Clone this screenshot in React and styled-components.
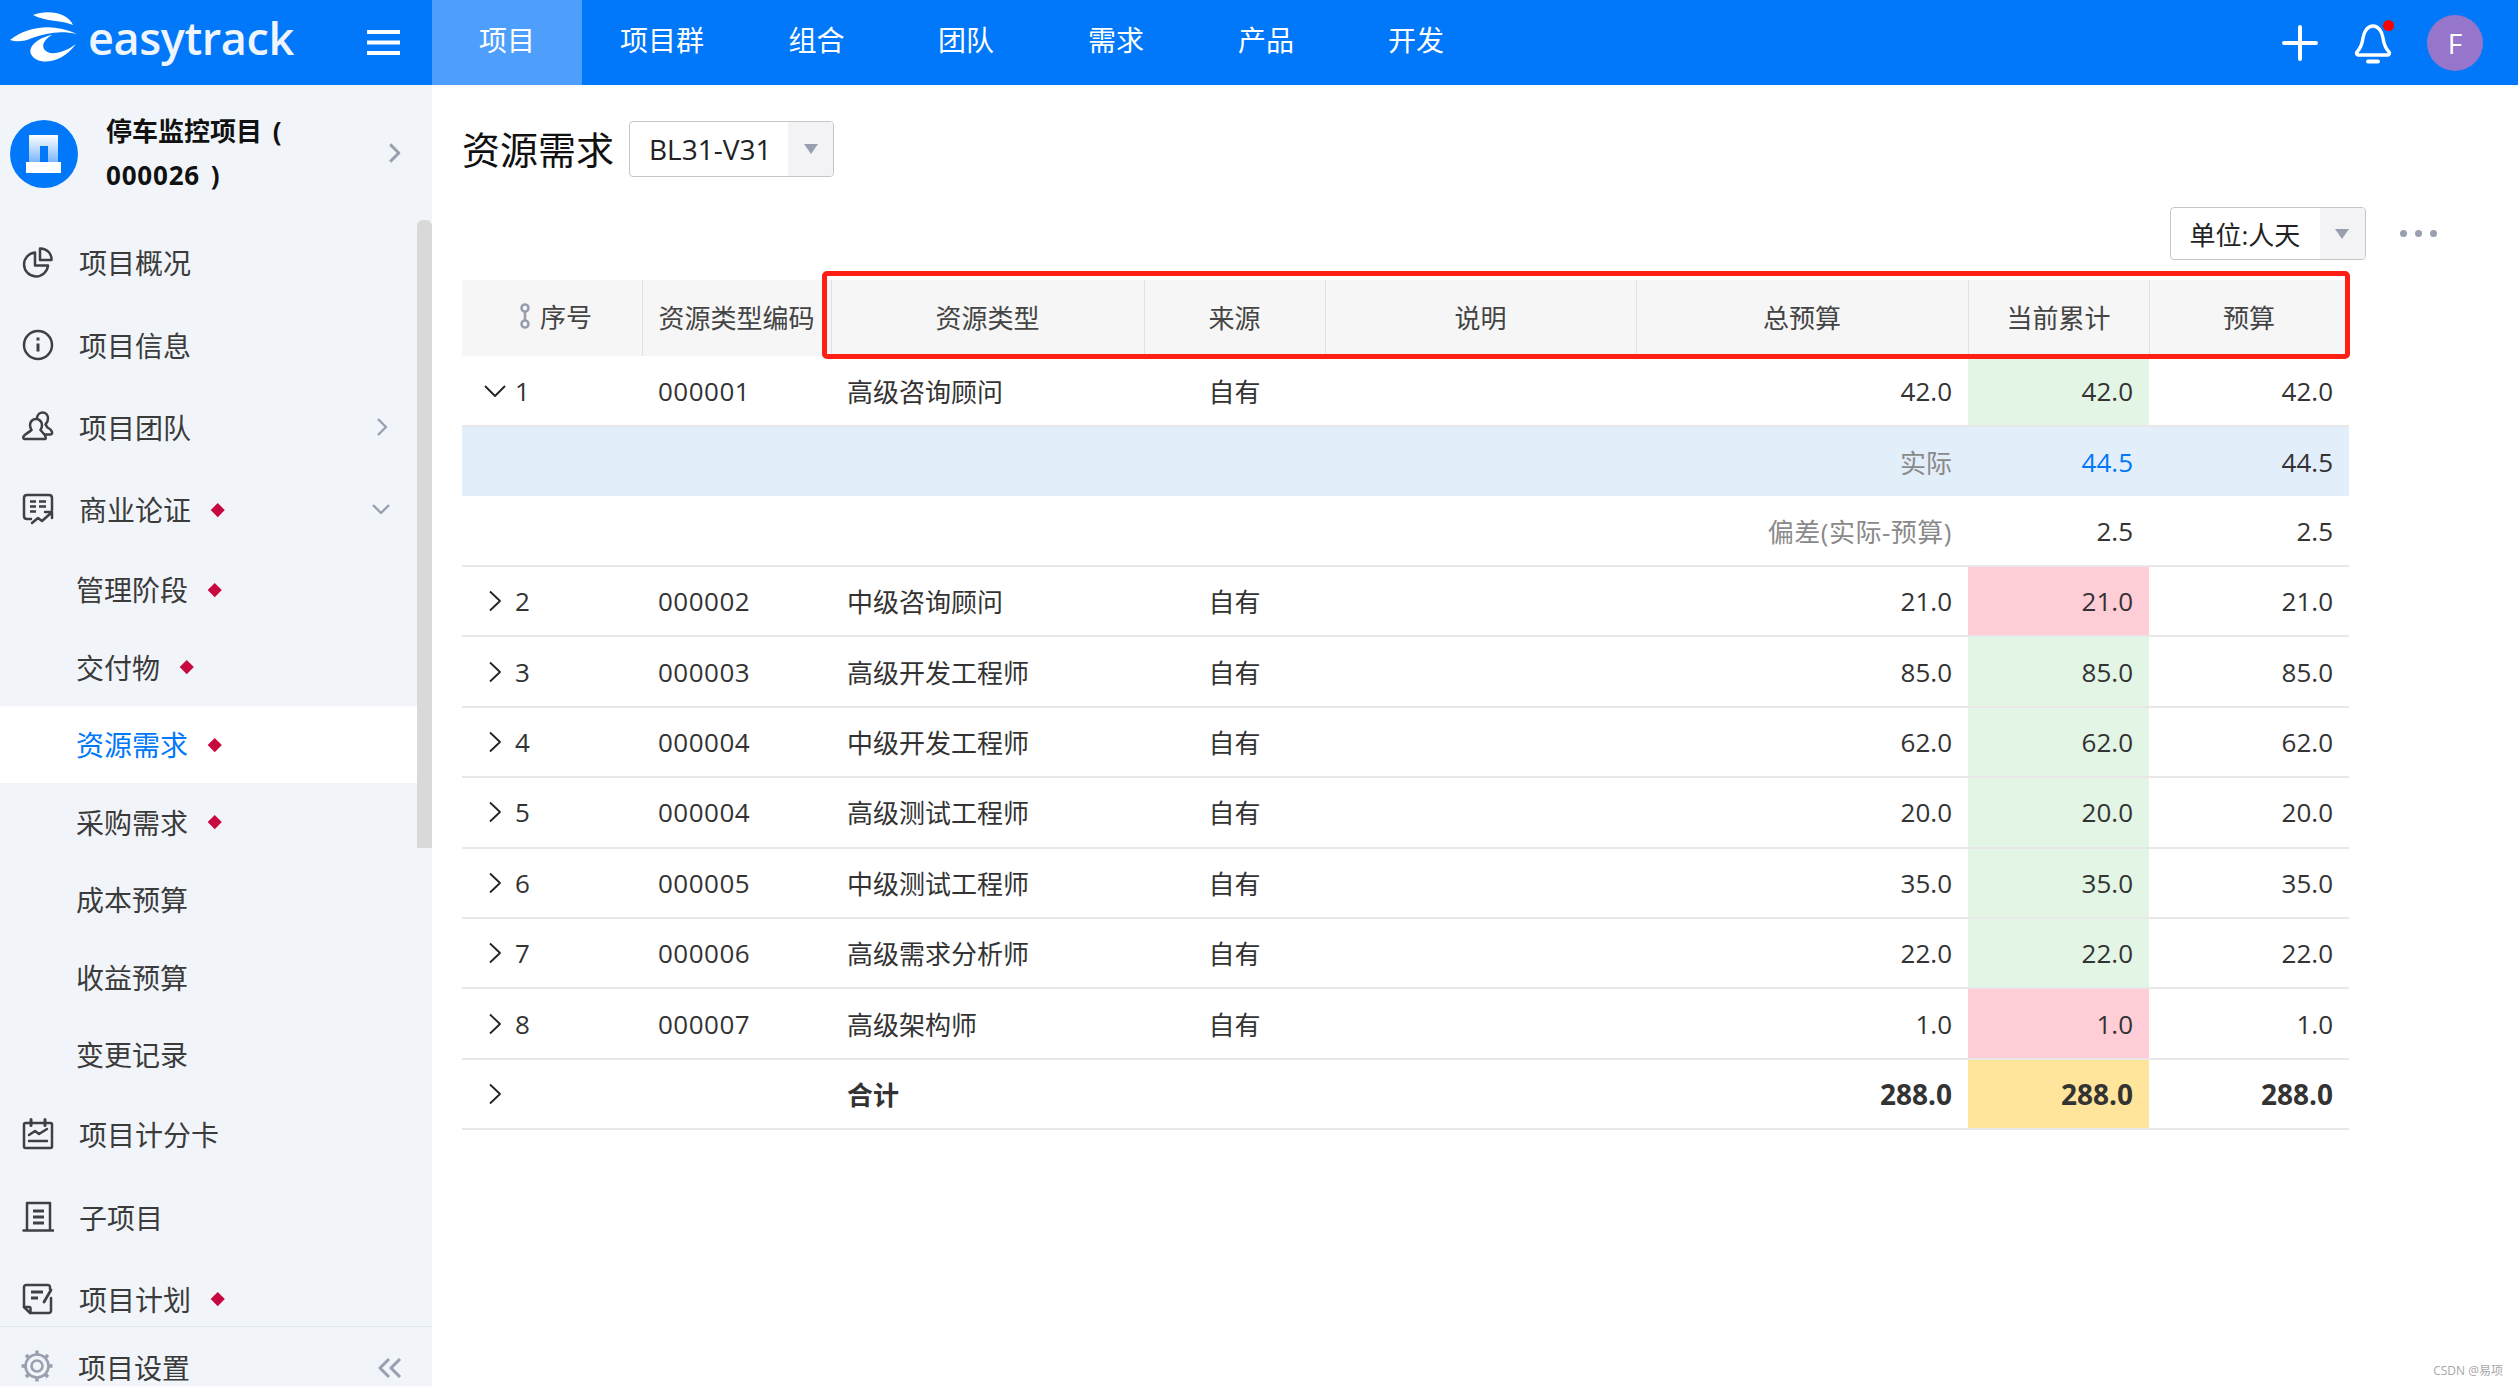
import React from 'react'
import styled, { createGlobalStyle } from 'styled-components'

const GlobalStyle = createGlobalStyle`
  html, body { margin: 0; padding: 0; background: #fff; }
  body { font-family: "Open Sans", "Noto Sans CJK SC", sans-serif; color: #333; }
  * { box-sizing: border-box; }
`

const Page = styled.div`
  position: relative;
  width: 2518px;
  height: 1386px;
  overflow: hidden;
  display: flex;
  flex-direction: column;
`

const TopBar = styled.header`
  height: 85px;
  flex-shrink: 0;
  background: #0078f9;
  display: flex;
  align-items: stretch;
  color: #fff;
`

const Brand = styled.div`
  width: 432px;
  display: flex;
  align-items: center;
  flex-shrink: 0;
`

const BrandName = styled.span`
  margin-left: 4px;
  width: 279px;
  font-family: "Open Sans", sans-serif;
  font-size: 45px;
  font-weight: 600;
  letter-spacing: -0.4px;
  color: #eef5fe;
  margin-top: -10px;
`

const Tab = styled.div`
  width: ${p => p.$width}px;
  display: flex;
  align-items: center;
  justify-content: center;
  padding-bottom: 8px;
  font-size: 28px;
  background: ${p => (p.$active ? '#4e9ffb' : 'transparent')};
`

const TopActions = styled.div`
  margin-left: auto;
  display: flex;
  align-items: center;
  padding-right: 35px;
`

const BellWrap = styled.div`
  position: relative;
  margin-left: 36px;
  width: 38px;
  height: 42px;
`

const BellDot = styled.span`
  position: absolute;
  right: -2px;
  top: -2px;
  width: 11px;
  height: 11px;
  border-radius: 50%;
  background: #ff0000;
`

const Avatar = styled.div`
  width: 56px;
  height: 56px;
  margin-left: 35px;
  border-radius: 50%;
  background: #9676ca;
  display: flex;
  align-items: center;
  justify-content: center;
  font-size: 28px;
`

const Body = styled.div`
  flex: 1;
  display: flex;
  min-height: 0;
`

const Sidebar = styled.aside`
  position: relative;
  width: 432px;
  flex-shrink: 0;
  background: #f1f5f9;
  display: flex;
  flex-direction: column;
  overflow: hidden;
`

const Thumb = styled.div`
  position: absolute;
  right: 0;
  top: 135px;
  width: 15px;
  height: 628px;
  background: #d9d9d9;
  border-radius: 6px 6px 0 0;
`

const ProjectHead = styled.div`
  height: 136px;
  flex-shrink: 0;
  display: flex;
  align-items: center;
  padding-left: 10px;
`

const ProjectLogo = styled.div`
  width: 68px;
  height: 68px;
  flex-shrink: 0;
  margin-top: 1px;
`

const ProjectName = styled.div`
  width: 282px;
  margin-left: 28px;
  font-size: 26px;
  line-height: 44px;
  font-weight: 700;
  word-spacing: 4px;
  color: #111;
`

const ProjectCode = styled.span`
  letter-spacing: 0.8px;
`

const Menu = styled.nav`
  flex: 1;
  min-height: 0;
  overflow: hidden;
`

const MenuRow = styled.div`
  height: ${p => (p.$sub ? '77.5px' : '82.4px')};
  display: flex;
  align-items: center;
  padding-left: ${p => (p.$sub ? '76px' : '22px')};
  padding-right: 41px;
  font-size: 28px;
  color: ${p => (p.$active ? '#0078f9' : '#3b3b3b')};
  background: ${p => (p.$active ? '#fff' : 'transparent')};
`

const MenuIcon = styled.span`
  width: 32px;
  height: 32px;
  margin-right: 25px;
  display: flex;
  color: #3d4046;
`

const Diamond = styled.i`
  width: 9.5px;
  height: 9.5px;
  margin-left: 22px;
  background: #c8093f;
  transform: rotate(45deg);
`

const MenuChevron = styled.span`
  margin-left: auto;
  margin-right: ${p => p.$inset || 0}px;
  margin-top: ${p => p.$drop || 0}px;
  display: flex;
  color: #9a9fb0;
`

const SideFooter = styled.div`
  height: 60px;
  flex-shrink: 0;
  border-top: 1px solid #dfe6ee;
  padding: 22px 30px 0 21px;
  display: flex;
  align-items: flex-start;
  font-size: 28px;
  line-height: 38px;
  color: #3b3b3b;
`

const Main = styled.main`
  flex: 1;
  padding: 36px 0 0 30px;
`

const TitleRow = styled.div`
  height: 56px;
  display: flex;
  align-items: center;
`

const Title = styled.h1`
  margin: -4px 15px 0 0;
  font-size: 38px;
  font-weight: 400;
  color: #111;
  width: 152px;
  white-space: nowrap;
`

const Select = styled.div`
  display: flex;
  align-items: stretch;
  width: ${p => p.$width}px;
  height: ${p => p.$height}px;
  border: 1px solid #c6c6c6;
  border-radius: 4px;
  font-size: ${p => p.$font}px;
  color: #222;
  overflow: hidden;
`

const SelectValue = styled.div`
  flex: 1;
  padding-left: 19px;
  display: flex;
  align-items: center;
  white-space: nowrap;
`

const SelectArrow = styled.div`
  width: 45px;
  background: #f3f3f5;
  display: flex;
  align-items: center;
  justify-content: center;

  &::after {
    content: '';
    border-left: 7px solid transparent;
    border-right: 7px solid transparent;
    border-top: 10px solid #9a9fb0;
  }
`

const ToolRow = styled.div`
  height: 53px;
  margin-top: 30px;
  display: flex;
  align-items: center;
  justify-content: flex-end;
  width: 1975px;
`

const Dots = styled.div`
  display: flex;
  gap: 7.5px;
  margin-left: 34px;

  span {
    width: 7.5px;
    height: 7.5px;
    border-radius: 50%;
    background: #9a9fb0;
  }
`

const TableWrap = styled.div`
  position: relative;
  width: 1887px;
  margin-top: 20px;
`

const Highlight = styled.div`
  position: absolute;
  left: 360px;
  top: -9px;
  width: 1528px;
  height: 88px;
  border: 5px solid #ff2015;
  border-radius: 5px;
`

const columns = '180px 189px 313px 181px 311px 332px 181px 200px'

const HeadRow = styled.div`
  display: grid;
  grid-template-columns: ${columns};
  height: 76px;
  background: #f6f6f6;
`

const HeadCell = styled.div`
  display: flex;
  align-items: center;
  justify-content: center;
  padding-bottom: ${p => (p.$first ? '4px' : '2px')};
  padding-left: ${p => (p.$first ? '7px' : '0')};
  padding-right: ${p => (p.$first ? '0' : '1px')};
  font-size: 26px;
  color: #444;
  white-space: nowrap;
  border-left: ${p => (p.$first ? 'none' : '1px solid #e2e2e2')};
`

const Row = styled.div`
  display: grid;
  grid-template-columns: ${columns};
  height: ${p => p.$height}px;
  background: ${p => (p.$blue ? '#e3eefb' : 'transparent')};
  border-bottom: ${p => (p.$blue ? 'none' : '2px solid #e8e8e8')};
  font-size: 26px;
  font-weight: ${p => (p.$bold ? 700 : 400)};
  color: #333;
`

const tones = { green: '#e3f5e5', pink: '#ffcdd6', yellow: '#ffe49b' }

const aligns = { right: 'flex-end', center: 'center' }

const Cell = styled.div`
  display: flex;
  align-items: center;
  padding: 0 16px;
  white-space: nowrap;
  justify-content: ${p => aligns[p.$align] || 'flex-start'};
  font-size: ${p => (p.$big ? '28px' : 'inherit')};
  letter-spacing: ${p => (p.$wide ? '0.5px' : 'normal')};
  background: ${p => tones[p.$tone] || 'transparent'};
  color: ${p => (p.$muted ? '#8a8a8a' : p.$link ? '#0078f9' : 'inherit')};
`

const IndexCell = styled.div`
  display: flex;
  align-items: center;
  padding-left: 21px;
  color: #333;
  font-weight: 400;
`

const Expander = styled.span`
  width: 24px;
  height: 24px;
  margin-right: 8px;
  display: flex;
  align-items: center;
  justify-content: center;
  color: #222;
`

const Watermark = styled.div`
  position: absolute;
  right: 15px;
  bottom: 7px;
  font-size: 12px;
  color: #a8a8a8;
`

const stroke = { fill: 'none', stroke: 'currentColor', strokeLinecap: 'round', strokeLinejoin: 'round' }

function Logo() {
  return (
    <svg width="84" height="85" viewBox="0 0 84 85" style={{ flexShrink: 0 }}>
      <g fill="#fff">
        <path d="M33 15C48 9 68 13 73 25C62 20 46 22 33 15Z" />
        <path d="M10 40C26 27 52 22 77 34C60 30 46 33 32 38C24 42 16 42 10 40Z" />
        <path d="M52 35C38 38 28 46 31 54C36 65 60 66 76 44C63 54 48 56 44 49C41 43 47 38 52 35Z" />
      </g>
    </svg>
  )
}

function Hamburger() {
  return (
    <svg width="33" height="25" viewBox="0 0 33 25">
      <path d="M0 2h33M0 12.500h33M0 23h33" stroke="#fff" strokeWidth="4" />
    </svg>
  )
}

function ChevronRight({ size = 10, w = 2.4 }) {
  return (
    <svg width={size + 2} height={size * 2} viewBox="0 0 12 20">
      <path d="M2 2l8 8-8 8" {...stroke} strokeWidth={w} strokeLinecap="butt" />
    </svg>
  )
}

function ChevronDown() {
  return (
    <svg width="20" height="12" viewBox="0 0 20 12">
      <path d="M2 2l8 8 8-8" {...stroke} strokeWidth="2.4" strokeLinecap="butt" />
    </svg>
  )
}

const icons = {
  pie: (
    <>
      <path d="M13 6.500A12 12 0 1 0 26 19.500H13Z" />
      <path d="M18 2.500A11 11 0 0 1 29.500 14H18Z" />
    </>
  ),
  info: (
    <>
      <circle cx="16" cy="16" r="14" />
      <path d="M16 14.500v8" strokeWidth="3" strokeLinecap="butt" />
      <path d="M16 8.500v3" strokeWidth="3" strokeLinecap="butt" />
    </>
  ),
  team: (
    <>
      <path d="M9.500 19c-1-1.500-1.500-3-1.500-5a6 6 0 0 1 12 0c0 2-.5 3.500-1.500 5l3 3.500c2 1.500 2.500 3.500 2 5.500H3c-1.500 0-2-1-1.500-2.500C2.500 23 6.500 22 9.500 19Z" />
      <path d="M15 6.500c.5-3 3-5 5.500-5 3.500 0 5.500 3 5.500 6 0 2.500-1 4.500-2.500 6l2 3c2 1 4 2.500 4.500 4.500.5 1.500-.5 2.500-2 2.500h-4" />
    </>
  ),
  biz: (
    <>
      <path d="M9 26H5c-2 0-3-1-3-3V5c0-2 1-3 3-3h22c2 0 3 1 3 3v12" />
      <path d="M8 8.500h6M17 8.500h7M8 13.500h6M17 13.500h7M8 18.500h6" strokeWidth="2.600" strokeLinecap="butt" />
      <path d="M10 30l6-5 4 3 9-8M23 19h7v6" />
    </>
  ),
  card: (
    <>
      <rect x="2" y="5" width="28" height="25" rx="1.500" />
      <path d="M9 1.500v6M23 1.500v6" strokeWidth="3" />
      <path d="M7 17l6-4 4 3 8-5M7 23h18" />
    </>
  ),
  doc: (
    <>
      <path d="M5 28V2h23v26M1.500 29.500h30" />
      <path d="M11 10h11M11 16h11M11 22h11" strokeWidth="2.800" strokeLinecap="butt" />
    </>
  ),
  plan: (
    <>
      <path d="M28 6V4c0-1-1-2-2-2H4C3 2 2 3 2 4v20l6 6h19c1 0 2-1 2-2V15" />
      <path d="M2 24h5c1 0 1.500.5 1.500 1.500V30" />
      <path d="M9 9h12M9 15h7" strokeWidth="2.800" strokeLinecap="butt" />
      <path d="M22 19l7-12" strokeWidth="2.800" />
    </>
  ),
}

function MenuGlyph({ name }) {
  return (
    <svg width="32" height="32" viewBox="0 0 32 32" {...stroke} strokeWidth="2.500">
      {icons[name]}
    </svg>
  )
}

function Gear() {
  return (
    <svg width="32" height="34" viewBox="0 0 32 34" style={{ marginRight: 25, flexShrink: 0, color: '#9a9fb0' }} {...stroke}>
      <circle cx="16" cy="17" r="11.500" strokeWidth="2.600" />
      <circle cx="16" cy="17" r="5.500" strokeWidth="2.600" />
      <path d="M16 1.500v4M16 28.500v4M.5 17h4M27.500 17h4M5 6l3 3M24 25l3 3M27 6l-3 3M8 25l-3 3" strokeWidth="3.400" strokeLinecap="butt" />
    </svg>
  )
}

const tabs = [
  { label: '项目', width: 150 },
  { label: '项目群', width: 160 },
  { label: '组合', width: 149 },
  { label: '团队', width: 150 },
  { label: '需求', width: 150 },
  { label: '产品', width: 150 },
  { label: '开发', width: 150 },
]

const topMenu = [
  { name: '项目概况', icon: 'pie' },
  { name: '项目信息', icon: 'info' },
  { name: '项目团队', icon: 'team', arrow: 'right' },
  { name: '商业论证', icon: 'biz', arrow: 'down', mark: true },
]

const subMenu = [
  { name: '管理阶段', mark: true },
  { name: '交付物', mark: true },
  { name: '资源需求', mark: true, active: true },
  { name: '采购需求', mark: true },
  { name: '成本预算' },
  { name: '收益预算' },
  { name: '变更记录' },
]

const bottomMenu = [
  { name: '项目计分卡', icon: 'card' },
  { name: '子项目', icon: 'doc' },
  { name: '项目计划', icon: 'plan', mark: true },
]

const rows = [
  { no: 2, code: '000002', type: '中级咨询顾问', val: '21.0', tone: 'pink' },
  { no: 3, code: '000003', type: '高级开发工程师', val: '85.0', tone: 'green' },
  { no: 4, code: '000004', type: '中级开发工程师', val: '62.0', tone: 'green' },
  { no: 5, code: '000004', type: '高级测试工程师', val: '20.0', tone: 'green' },
  { no: 6, code: '000005', type: '中级测试工程师', val: '35.0', tone: 'green' },
  { no: 7, code: '000006', type: '高级需求分析师', val: '22.0', tone: 'green' },
  { no: 8, code: '000007', type: '高级架构师', val: '1.0', tone: 'pink' },
]

function TopItem({ item }) {
  return (
    <MenuRow>
      <MenuIcon><MenuGlyph name={item.icon} /></MenuIcon>
      {item.name}
      {item.mark && <Diamond />}
      {item.arrow === 'right' && <MenuChevron $inset={3}><ChevronRight /></MenuChevron>}
      {item.arrow === 'down' && <MenuChevron><ChevronDown /></MenuChevron>}
    </MenuRow>
  )
}

function DataRow({ no, open, code, type, source, val, tone, bold, height = 70.4 }) {
  return (
    <Row $height={height} $bold={bold}>
      <IndexCell>
        <Expander>
          {open ? (
            <svg width="24" height="14" viewBox="0 0 24 14"><path d="M2 2l10 10L22 2" {...stroke} strokeWidth="1.800" strokeLinecap="butt" /></svg>
          ) : (
            <svg width="14" height="22" viewBox="0 0 14 22"><path d="M2 1.500L12 11 2 20.500" {...stroke} strokeWidth="1.800" strokeLinecap="butt" /></svg>
          )}
        </Expander>
        {no}
      </IndexCell>
      <Cell $wide>{code}</Cell>
      <Cell>{type}</Cell>
      <Cell $align="center">{source}</Cell>
      <Cell />
      <Cell $align="right" $big={bold}>{val}</Cell>
      <Cell $align="right" $big={bold} $tone={tone}>{val}</Cell>
      <Cell $align="right" $big={bold}>{val}</Cell>
    </Row>
  )
}

export default function App() {
  return (
    <Page>
      <GlobalStyle />
      <TopBar>
        <Brand>
          <Logo />
          <BrandName>easytrack</BrandName>
          <Hamburger />
        </Brand>
        {tabs.map((t, i) => (
          <Tab key={t.label} $width={t.width} $active={i === 0}>{t.label}</Tab>
        ))}
        <TopActions>
          <svg width="36" height="36" viewBox="0 0 36 36">
            <path d="M18 2v32M2 18h32" stroke="#fff" strokeWidth="4" strokeLinecap="round" />
          </svg>
          <BellWrap>
            <svg width="38" height="42" viewBox="0 0 38 42" {...stroke} stroke="#fff" strokeWidth="3.400">
              <path d="M3 30c3-3 5-7 6-14 1-7 5-12 10-12s9 5 10 12c1 7 3 11 6 14 1 1 .5 3-1 3H4c-1.500 0-2-2-1-3Z" />
              <path d="M14 39.500h10" strokeWidth="4" />
            </svg>
            <BellDot />
          </BellWrap>
          <Avatar>F</Avatar>
        </TopActions>
      </TopBar>
      <Body>
        <Sidebar>
          <ProjectHead>
            <ProjectLogo>
              <svg width="68" height="68" viewBox="0 0 68 68">
                <defs>
                  <linearGradient id="tower" x1="0" y1="0" x2="0" y2="1">
                    <stop offset="0" stopColor="#fff" />
                    <stop offset="1" stopColor="#7db8fc" />
                  </linearGradient>
                </defs>
                <circle cx="34" cy="34" r="34" fill="#0078f9" />
                <path d="M19 15h29v27H19Z" fill="url(#tower)" />
                <path d="M30 26h8v17h-8Z" fill="#0078f9" />
                <path d="M16 42h35v11H16Z" fill="#fff" />
              </svg>
            </ProjectLogo>
            <ProjectName>停车监控项目 (<br /><ProjectCode>000026</ProjectCode> )</ProjectName>
            <MenuChevron style={{ marginLeft: 0 }}>
              <ChevronRight size={11} w={2.8} />
            </MenuChevron>
          </ProjectHead>
          <Menu>
            {topMenu.map(item => <TopItem key={item.name} item={item} />)}
            {subMenu.map(item => (
              <MenuRow key={item.name} $sub $active={item.active}>
                {item.name}
                {item.mark && <Diamond />}
              </MenuRow>
            ))}
            {bottomMenu.map(item => <TopItem key={item.name} item={item} />)}
          </Menu>
          <SideFooter>
            <Gear />
            项目设置
            <MenuChevron $drop={8}>
              <svg width="24" height="22" viewBox="0 0 24 22">
                <path d="M11 2L2 11l9 9M22 2l-9 9 9 9" {...stroke} strokeWidth="3" strokeLinecap="butt" />
              </svg>
            </MenuChevron>
          </SideFooter>
          <Thumb />
        </Sidebar>
        <Main>
          <TitleRow>
            <Title>资源需求</Title>
            <Select $width={205} $height={56} $font={28}>
              <SelectValue>BL31-V31</SelectValue>
              <SelectArrow />
            </Select>
          </TitleRow>
          <ToolRow>
            <Select $width={196} $height={53} $font={26}>
              <SelectValue>单位:人天</SelectValue>
              <SelectArrow />
            </Select>
            <Dots><span /><span /><span /></Dots>
          </ToolRow>
          <TableWrap>
            <HeadRow>
              <HeadCell $first>
                <svg width="12" height="26" viewBox="0 0 12 26" style={{ marginRight: 9 }} fill="none" stroke="#9a9fb0" strokeWidth="2.600">
                  <circle cx="6" cy="5" r="3.500" />
                  <circle cx="6" cy="21" r="3.500" />
                  <path d="M6 8.500v9" />
                </svg>
                <span>序号</span>
              </HeadCell>
              {['资源类型编码', '资源类型', '来源', '说明', '总预算', '当前累计', '预算'].map(t => (
                <HeadCell key={t}>{t}</HeadCell>
              ))}
            </HeadRow>
            <DataRow no={1} open code="000001" type="高级咨询顾问" source="自有" val="42.0" tone="green" height={71} />
            <Row $height={69} $blue>
              <Cell /><Cell /><Cell /><Cell /><Cell />
              <Cell $align="right" $muted>实际</Cell>
              <Cell $align="right" $link>44.5</Cell>
              <Cell $align="right">44.5</Cell>
            </Row>
            <Row $height={71}>
              <Cell /><Cell /><Cell /><Cell /><Cell />
              <Cell $align="right" $muted $wide>偏差(实际-预算)</Cell>
              <Cell $align="right">2.5</Cell>
              <Cell $align="right">2.5</Cell>
            </Row>
            {rows.map(r => <DataRow key={r.no} {...r} source="自有" />)}
            <DataRow type="合计" val="288.0" tone="yellow" bold />
            <Highlight />
          </TableWrap>
        </Main>
      </Body>
      <Watermark>CSDN @易项</Watermark>
    </Page>
  )
}
